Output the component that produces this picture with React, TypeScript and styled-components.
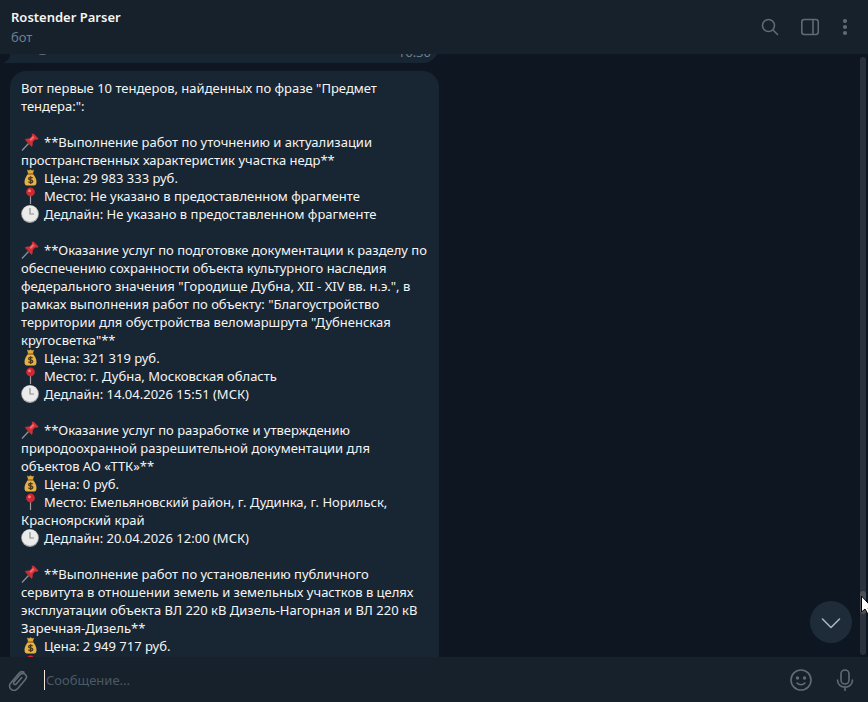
import React from "react";
import styled, { createGlobalStyle } from "styled-components";

const GlobalStyle = createGlobalStyle`
  * { box-sizing: border-box; }
  body { margin: 0; background: #0e1621; }
  body, button, input { font-family: "Noto Sans", "Open Sans", sans-serif; font-size: 13px; }
`;

const Page = styled.div`
  display: flex;
  flex-direction: column;
  height: 100vh;
  overflow: hidden;
  color: #f5f5f5;
`;

const Header = styled.header`
  flex: none;
  display: flex;
  align-items: center;
  justify-content: space-between;
  height: 54px;
  padding: 0 8px 0 11px;
  background: #17212b;
  z-index: 1;
`;

const Title = styled.h1`
  margin: 0;
  font-size: 13px;
  font-weight: 600;
  line-height: 20px;
`;

const Subtitle = styled.div`
  color: #6c7f92;
  line-height: 20px;
`;

const Actions = styled.div`
  display: flex;
  align-items: center;
`;

const IconButton = styled.button<{ $width: number }>`
  flex: none;
  display: flex;
  align-items: center;
  justify-content: center;
  width: ${(p) => p.$width}px;
  height: 40px;
  padding: 0;
  border: 0;
  background: none;
  color: #5f6b76;
`;

const Chat = styled.main`
  flex: 1;
  min-height: 0;
  display: flex;
  position: relative;
  overflow: hidden;
`;

const Messages = styled.div`
  flex: 1;
  min-width: 0;
  display: flex;
  flex-direction: column;
  align-items: flex-start;
  gap: 8px;
  padding-left: 10px;
  overflow: hidden;
`;

const Bubble = styled.article`
  flex: none;
  width: 429px;
  max-width: 100%;
  padding: 8px 8px 8px 11px;
  border-radius: 16px;
  background: #182533;
  line-height: 18px;
`;

const PreviousBubble = styled(Bubble)`
  position: relative;
  display: flex;
  align-items: flex-end;
  justify-content: space-between;
  margin-top: -24px;
  padding: 13px 8px 2px 29px;
  border-bottom-left-radius: 0;
  color: #6d7f8f;
`;

const Tail = styled.svg`
  position: absolute;
  left: -6px;
  bottom: 0;
`;

const Stroke = styled.span`
  width: 7px;
  height: 3px;
  margin-bottom: 6px;
  border-radius: 2px;
  background: #59636d;
`;

const Paragraph = styled.p`
  margin: 0 0 18px;
`;

const Line = styled.span`
  display: block;
`;

const Emoji = styled.svg`
  width: 18px;
  height: 18px;
  margin-right: 5px;
  vertical-align: top;
`;

const Scrollbar = styled.div`
  flex: none;
  width: 6px;
  margin: 3px 2px 2px 0;
  border-radius: 3px;
  background: #2b323b;
`;

const Thumb = styled.div`
  height: 23px;
  margin-top: 534px;
  border-radius: 3px;
  background: #4a5159;
`;

const ScrollDown = styled.button`
  position: absolute;
  right: 16px;
  bottom: 14px;
  display: flex;
  align-items: center;
  justify-content: center;
  width: 42px;
  height: 42px;
  padding: 2px 0 0;
  border: 0;
  border-radius: 50%;
  background: #1e2c3a;
  color: #a9b3bb;
`;

const Cursor = styled.svg`
  position: absolute;
  right: -5px;
  top: 541px;
`;

const Composer = styled.form`
  flex: none;
  display: flex;
  align-items: center;
  height: 45px;
  padding: 0 2px 0 0;
  background: #17212b;
  z-index: 1;
`;

const MessageInput = styled.input`
  flex: 1;
  min-width: 0;
  height: 20px;
  margin-left: 8px;
  padding: 0 0 0 1px;
  border: 0;
  border-left: 1px solid #f5e9df;
  outline: 0;
  background: none;
  color: #f5f5f5;
  &::placeholder { color: #4b5965; opacity: 1; }
`;

type Kind = "pin" | "money" | "place" | "clock";

const art: Record<Kind, React.ReactNode> = {
  pin: (
    <>
      <path d="M1 17.500 8 10" stroke="#8a9299" strokeWidth="1.3" />
      <path d="M4 6.500c2-1.300 3.500-1 4.500-1l2.500-2.500-.3-2L12.500.5l5 5-1.200 1.200-2-.2-2.500 2.500c0 1.500 0 3.500-1 5z" fill="#cf2f36" />
      <path d="M8.500 6.500 12 3l1.500 1.500-3.500 3.500z" fill="#f06a6c" />
      <path d="M4.200 6.700 10.700 13.700" stroke="#a3222b" />
    </>
  ),
  money: (
    <>
      <path d="M6 .5l2 1L9.500.2 11 1.500l2-.8L11.800 5H7.200z" fill="#dca93b" />
      <path d="M7 5h5c2 2 3.500 5 3.500 8 0 2.500-1 3.500-2.500 3.500H6c-1.500 0-2.500-1-2.500-3.500 0-3 1.500-6 3.500-8z" fill="#e3b34a" />
      <path d="M6.700 5h5.600" stroke="#98651d" strokeWidth="1.300" />
      <path d="M11.600 9.200c-1-1.300-4-1.100-4 .5s4.200 1 4.200 2.700-3.300 1.800-4.400.3M9.600 7.300v7.700" fill="none" stroke="#4e3a1a" strokeWidth="1.300" />
    </>
  ),
  place: (
    <>
      <path d="M9.500 8v9" stroke="#9b9da3" strokeWidth="1.200" />
      <circle cx="9.500" cy="5" r="4.400" fill="#cf2832" />
      <circle cx="8.500" cy="3.800" r="1.500" fill="#f47a78" />
    </>
  ),
  clock: (
    <>
      <circle cx="9" cy="9" r="8.900" fill="#a5a8ab" />
      <circle cx="9" cy="8.600" r="8.100" fill="#ebebe9" />
      <path d="M9 3v6h4" fill="none" stroke="#8c8f92" strokeWidth="1.200" />
    </>
  ),
};

const names: Record<Kind, string> = { pin: "Тендер", money: "Цена", place: "Место", clock: "Срок" };

function Row({ kind, children }: { kind: Kind; children: React.ReactNode }) {
  return (
    <Line>
      <Emoji viewBox="0 0 18 18" role="img" aria-label={names[kind]}>{art[kind]}</Emoji>
      {children}
    </Line>
  );
}

const tenders = [
  {
    title: "Выполнение работ по уточнению и актуализации пространственных характеристик участка недр",
    price: "29 983 333 руб.",
    place: "Не указано в предоставленном фрагменте",
    deadline: "Не указано в предоставленном фрагменте",
  },
  {
    title: "Оказание услуг по подготовке документации к разделу по обеспечению сохранности объекта культурного наследия федерального значения \"Городище Дубна, XII - XIV вв. н.э.\", в рамках выполнения работ по объекту: \"Благоустройство территории для обустройства веломаршрута \"Дубненская кругосветка\"",
    price: "321 319 руб.",
    place: "г. Дубна, Московская область",
    deadline: "14.04.2026 15:51 (МСК)",
  },
  {
    title: "Оказание услуг по разработке и утверждению природоохранной разрешительной документации для объектов АО «ТТК»",
    price: "0 руб.",
    place: "Емельяновский район, г. Дудинка, г. Норильск, Красноярский край",
    deadline: "20.04.2026 12:00 (МСК)",
  },
  {
    title: "Выполнение работ по установлению публичного сервитута в отношении земель и земельных участков в целях эксплуатации объекта ВЛ 220 кВ Дизель-Нагорная и ВЛ 220 кВ Заречная-Дизель",
    price: "2 949 717 руб.",
    place: "Не указано в предоставленном фрагменте",
    deadline: "Не указано в предоставленном фрагменте",
  },
];

const stroke = { fill: "none", stroke: "currentColor", strokeWidth: 1.6, strokeLinecap: "round", strokeLinejoin: "round" } as const;

export default function App() {
  return (
    <Page>
      <GlobalStyle />
      <Header>
        <div>
          <Title>Rostender Parser</Title>
          <Subtitle>бот</Subtitle>
        </div>
        <Actions>
          <IconButton $width={40} aria-label="Поиск">
            <svg width="18" height="18" viewBox="0 0 18 18" {...stroke}><circle cx="7.500" cy="7.500" r="6" /><path d="M12 12l4.500 4.500" /></svg>
          </IconButton>
          <IconButton $width={40} aria-label="Боковая панель">
            <svg width="18" height="18" viewBox="0 0 18 18" {...stroke}><rect x=".8" y="1.500" width="16.500" height="15" rx="2.500" /><path d="M12 2v14" /></svg>
          </IconButton>
          <IconButton $width={30} aria-label="Меню">
            <svg width="6" height="18" viewBox="0 0 6 18" fill="currentColor"><circle cx="3" cy="3" r="2.100" /><circle cx="3" cy="9" r="2.100" /><circle cx="3" cy="15" r="2.100" /></svg>
          </IconButton>
        </Actions>
      </Header>
      <Chat>
        <Messages>
          <PreviousBubble>
            <Tail width="6" height="9" viewBox="0 0 6 9"><path d="M6 0C6 4 4 7 0 8.500V9h6z" fill="#182533" /></Tail>
            <Stroke />
            <time>16:30</time>
          </PreviousBubble>
          <Bubble>
            <Paragraph>Вот первые 10 тендеров, найденных по фразе "Предмет тендера:":</Paragraph>
            {tenders.map((t) => (
              <Paragraph key={t.title}>
                <Row kind="pin">**{t.title}**</Row>
                <Row kind="money">Цена: {t.price}</Row>
                <Row kind="place">Место: {t.place}</Row>
                <Row kind="clock">Дедлайн: {t.deadline}</Row>
              </Paragraph>
            ))}
          </Bubble>
        </Messages>
        <Scrollbar><Thumb /></Scrollbar>
        <ScrollDown aria-label="Вниз">
          <svg width="20" height="12" viewBox="0 0 20 12" {...stroke}><path d="M1.500 2 10 10.500l8.500-8.500" /></svg>
        </ScrollDown>
        <Cursor width="12" height="19" viewBox="0 0 12 19"><path d="M.5 1v16l3.500-3 2.500 4.500 2.500-1L7 13h4.500z" fill="#fff" stroke="#000" /></Cursor>
      </Chat>
      <Composer>
        <IconButton $width={36} type="button" aria-label="Прикрепить файл">
          <svg width="20" height="22" viewBox="0 0 20 22" {...stroke}><path d="M13.800 8.500 8.500 14.800c-1.600 1.800-4-.2-2.500-2l6-7c3.200-3.600 8.500.7 5.500 4.500l-7.500 9C5.500 24.300-1.200 19 2.700 13.900L11 4.200c1.500-1.700 3.700-1.700 5-1" /></svg>
        </IconButton>
        <MessageInput aria-label="Сообщение" placeholder="Сообщение..." />
        <IconButton $width={46} type="button" aria-label="Эмодзи">
          <svg width="22" height="22" viewBox="0 0 22 22" {...stroke}><circle cx="11" cy="11" r="10" /><circle cx="7.500" cy="9" r=".9" fill="currentColor" /><circle cx="14.500" cy="9" r=".9" fill="currentColor" /><path d="M7 14c2 2.300 6 2.300 8 0" /></svg>
        </IconButton>
        <IconButton $width={42} type="button" aria-label="Голосовое сообщение">
          <svg width="18" height="22" viewBox="0 0 18 22" {...stroke}><rect x="5" y="1" width="8" height="14" rx="4" /><path d="M1.500 11c0 9.500 15 9.500 15 0M9 18v3.500" /></svg>
        </IconButton>
      </Composer>
    </Page>
  );
}
